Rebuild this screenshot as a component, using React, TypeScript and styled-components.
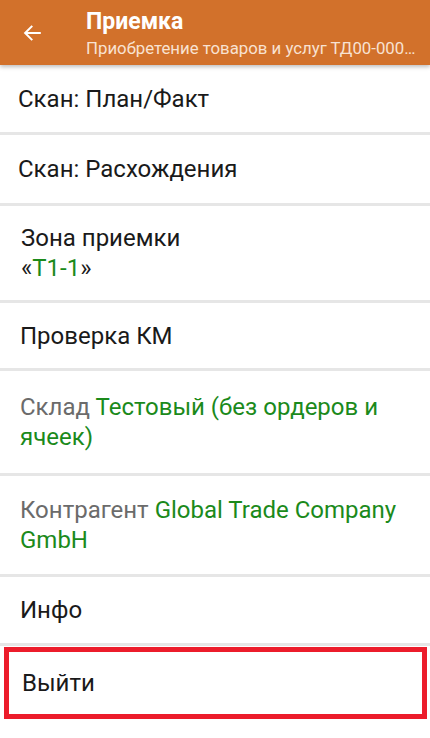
import React from "react";
import styled, { createGlobalStyle } from "styled-components";

const Global = createGlobalStyle`
  html, body { margin: 0; padding: 0; background: #ffffff; }
  body { font-family: Roboto, "Noto Sans", sans-serif; }
  * { box-sizing: border-box; }
`;

const Screen = styled.div`
  width: 430px;
  height: 738px;
  background: #ffffff;
  display: flex;
  flex-direction: column;
  overflow: hidden;
`;

const Header = styled.header`
  height: 65px;
  background: #d2712b;
  display: flex;
  align-items: center;
  box-shadow: 0 2px 4px rgba(0, 0, 0, 0.25);
  position: relative;
  z-index: 1;
  flex-shrink: 0;
`;

const BackButton = styled.div`
  width: 86px;
  height: 65px;
  display: flex;
  align-items: center;
  padding-left: 21px;
`;

const Titles = styled.div`
  display: flex;
  flex-direction: column;
  min-width: 0;
  flex: 1;
  padding-right: 10px;
`;

const Title = styled.div`
  color: #ffffff;
  font-size: 23px;
  font-weight: 700;
  line-height: 28px;
  margin-top: 1px;
`;

const Subtitle = styled.div`
  color: #f8e2d2;
  font-size: 16.8px;
  line-height: 22px;
  margin-top: 1px;
  white-space: nowrap;
  overflow: hidden;
  text-overflow: ellipsis;
`;

const List = styled.div`
  display: flex;
  flex-direction: column;
`;

const Row = styled.div<{ $h: number; $pad?: number; $boxed?: boolean }>`
  height: ${(p) => p.$h}px;
  display: flex;
  flex-direction: column;
  justify-content: center;
  padding-left: ${(p) => p.$pad ?? 20}px;
  padding-right: 16px;
  border-bottom: 3px solid #e6e6e6;
  font-size: 24px;
  line-height: 30px;
  color: #1a1a1a;
  ${(p) =>
    p.$boxed
      ? `
    margin: 1px 3px 0 4px;
    border: 5px solid #ec1c2b;
    padding-left: 13px;
  `
      : ""}
`;

const Muted = styled.span`
  color: #6b6b6b;
`;

const Green = styled.span`
  color: #1b8a1b;
`;

const Plain = styled.span`
  color: #1a1a1a;
`;

export default function App() {
  return (
    <>
      <Global />
      <Screen>
        <Header>
          <BackButton>
            <svg width="22" height="22" viewBox="0 0 24 24">
              <path
                d="M20.5 12H5M11.5 5L4.5 12l7 7"
                fill="none"
                stroke="#ffffff"
                strokeWidth="2.2"
                strokeLinecap="square"
              />
            </svg>
          </BackButton>
          <Titles>
            <Title>Приемка</Title>
            <Subtitle>Приобретение товаров и услуг ТД00-000052 от 12.03.2020</Subtitle>
          </Titles>
        </Header>
        <List>
          <Row $h={70} $pad={18}>Скан: План/Факт</Row>
          <Row $h={71} $pad={18}>Скан: Расхождения</Row>
          <Row $h={97} $pad={21}>
            <div>Зона приемки</div>
            <div>
              <Plain>«</Plain>
              <Green>Т1-1</Green>
              <Plain>»</Plain>
            </div>
          </Row>
          <Row $h={68}>Проверка КМ</Row>
          <Row $h={105}>
            <div>
              <Muted>Склад </Muted>
              <Green>Тестовый (без ордеров и ячеек)</Green>
            </div>
          </Row>
          <Row $h={101}>
            <div>
              <Muted>Контрагент </Muted>
              <Green>Global Trade Company GmbH</Green>
            </div>
          </Row>
          <Row $h={69}>Инфо</Row>
          <Row $h={72} $boxed>Выйти</Row>
        </List>
      </Screen>
    </>
  );
}
